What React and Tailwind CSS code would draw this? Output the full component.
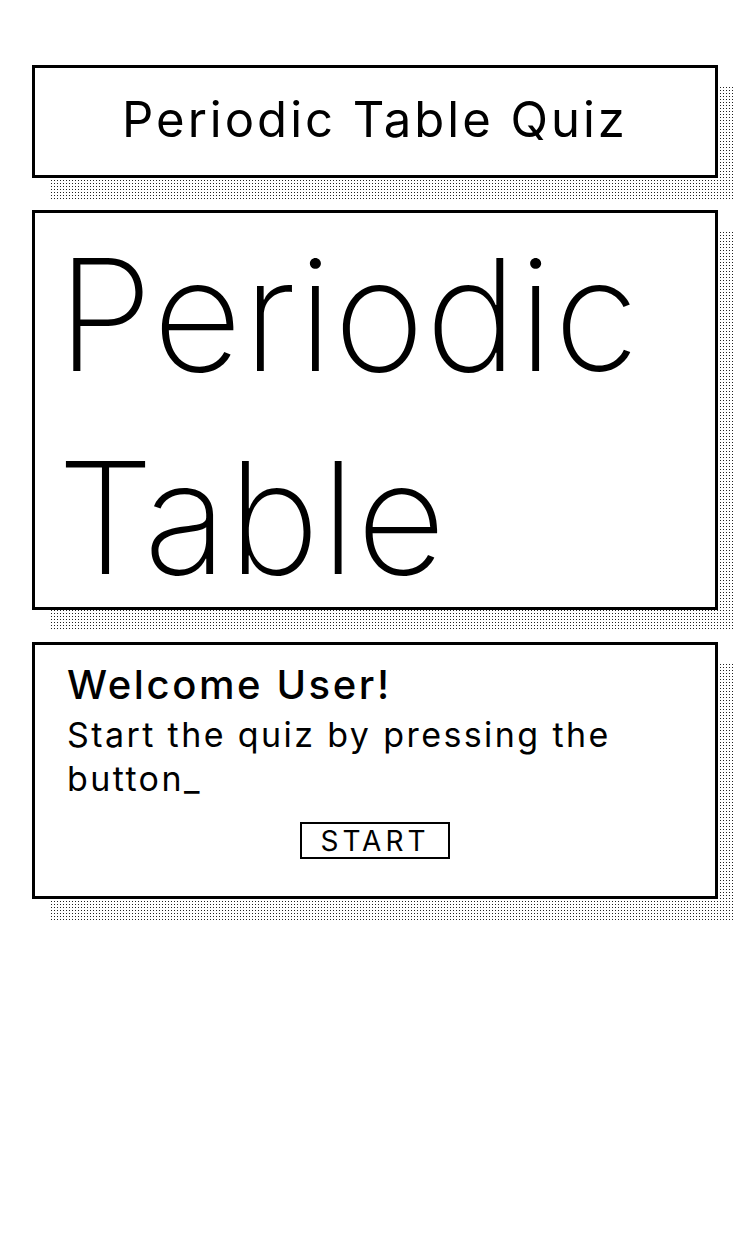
import React from "react";

const dots =
  "bg-[radial-gradient(circle,#222_0.8px,transparent_1px)] bg-[length:3px_3px]";

function Card({ children, className = "" }) {
  return (
    <div className="relative">
      <div className={`absolute inset-0 left-[18px] top-[21px] -right-[16px] -bottom-[21px] ${dots}`} />
      <div className={`relative bg-white border-[3px] border-black ${className}`}>
        {children}
      </div>
    </div>
  );
}

export default function App() {
  const [started, setStarted] = React.useState(false);

  return (
    <div
      className="min-h-[1250px] bg-white text-black px-8 pt-[65px] flex flex-col gap-8"
      style={{ fontFamily: "Inter, 'Noto Sans', sans-serif" }}
    >
      <Card className="h-[113px] flex items-center justify-center">
        <h1 className="text-[49px] font-normal tracking-[3px] leading-none pb-1">
          Periodic Table Quiz
        </h1>
      </Card>

      <Card className="h-[400px] px-8 overflow-hidden">
        <div className="-ml-[10px] text-[155px] font-extralight leading-[203px] tracking-[1px]">
          Periodic
          <br />
          Table
        </div>
      </Card>

      <Card className="h-[257px] px-8 pt-[16px]">
        <h2 className="text-[40px] font-medium leading-[48px] tracking-[2.6px]">
          Welcome User!
        </h2>
        <p className="mt-1 text-[34px] leading-[44px] tracking-[2.4px]">
          Start the quiz by pressing the button_
        </p>
        <div className="flex justify-center mt-[21px]">
          <button
            onClick={() => setStarted(true)}
            className="border-2 border-black px-[18px] h-[37px] text-[28px] leading-none tracking-[4px]"
          >
            {started ? "LOADING" : "START"}
          </button>
        </div>
      </Card>
    </div>
  );
}
